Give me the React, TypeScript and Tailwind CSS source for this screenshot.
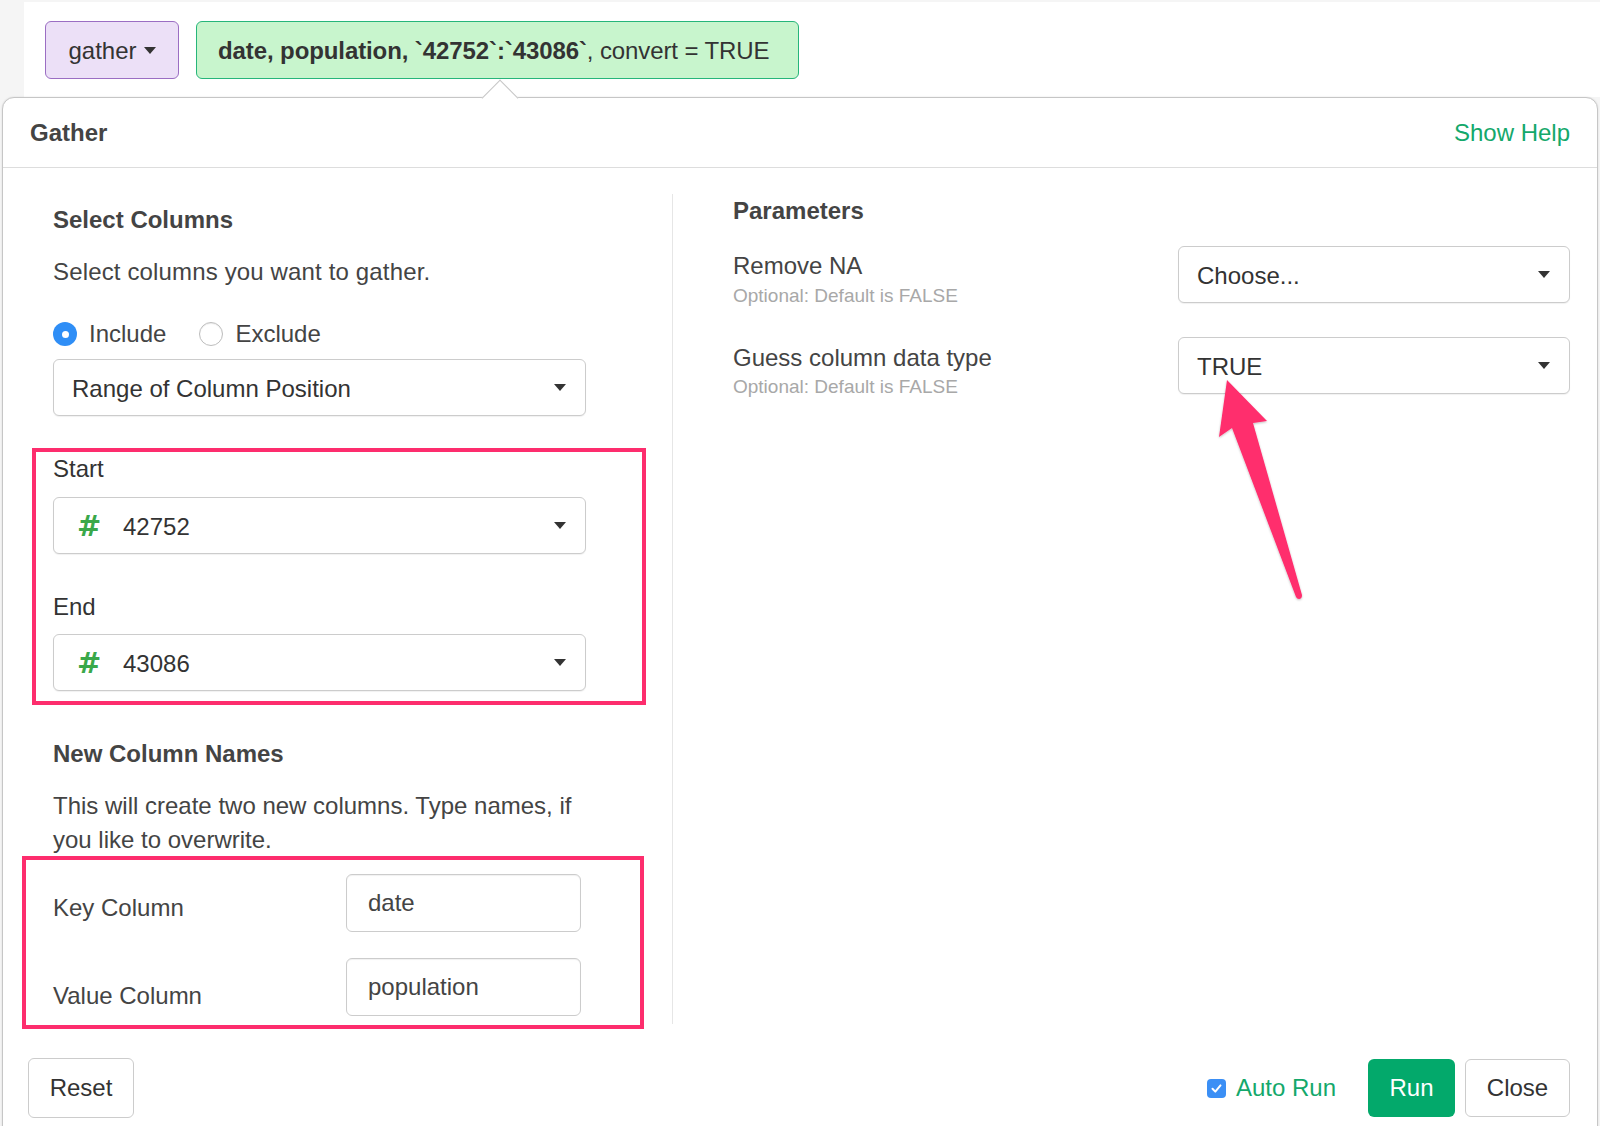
import React from "react";

const Caret = () => (
  <svg width="12" height="7" viewBox="0 0 12 7" className="shrink-0">
    <path d="M0 0 L12 0 L6 7 Z" fill="#333" />
  </svg>
);

const Select = ({ children, w = "w-[533px]" }: { children: React.ReactNode; w?: string }) => (
  <div className={`${w} h-[57px] border border-[#cccccc] rounded-[6px] bg-white flex items-center pl-[18px] pr-[19px] shadow-[0_1px_1px_rgba(0,0,0,0.06)]`}>
    <div className="flex-1 flex items-center pt-[2px] text-[24px] text-[#333]">{children}</div>
    <Caret />
  </div>
);

const Hash = () => (
  <span className="text-[#3aa84a] font-bold text-[29px] w-[51px] pl-[5px] leading-none font-['DejaVu_Sans',sans-serif]">#</span>
);

export default function App() {
  return (
    <div className="w-[1600px] h-[1126px] overflow-hidden relative bg-[#f5f5f5] font-['Liberation_Sans',Arial,sans-serif] text-[#333]">
      {/* top bar */}
      <div className="ml-[24px] mt-[2px] h-[95px] bg-white flex items-start pt-[19px] pl-[21px] gap-[17px]">
        <div className="h-[58px] w-[134px] rounded-[6px] border border-[#9b6ec3] bg-[#ece0f7] flex items-center justify-center gap-[7px] pt-[1px] text-[24px] text-[#333]">
          <span>gather</span>
          <Caret />
        </div>
        <div className="h-[58px] w-[603px] rounded-[6px] border border-[#27b57a] bg-[#c8f5cd] flex items-center pl-[21px] pt-[1px] text-[24px] text-[#333] whitespace-nowrap tracking-[-0.1px]">
          <span className="font-bold">date, population, `42752`:`43086`</span>
          <span>, convert = TRUE</span>
        </div>
      </div>

      {/* panel */}
      <div className="relative ml-[2px] w-[1596px] h-[1100px] bg-white border border-[#c6c6c6] rounded-t-[12px] shadow-[0_0_2px_rgba(0,0,0,0.12)]">
        {/* popover arrow */}
        <div className="absolute left-[484px] top-[-13px] w-[26px] h-[26px] rotate-45 bg-white border-l border-t border-[#c6c6c6]" />

        {/* header */}
        <div className="relative h-[70px] border-b border-[#dddddd] flex items-center justify-between pl-[27px] pr-[27px]">
          <span className="text-[24px] font-bold text-[#444]">Gather</span>
          <span className="text-[24px] text-[#14a86b]">Show Help</span>
        </div>

        {/* body */}
        <div className="flex mt-[26px] h-[830px]">
          {/* left column */}
          <div className="w-[670px] border-r border-[#e6e6e6] pl-[50px] flex flex-col">
            <div className="mt-[10px] leading-[32px] text-[24px] font-bold text-[#444]">Select Columns</div>
            <div className="mt-[20px] leading-[32px] text-[24px] text-[#444] tracking-[0.15px]">Select columns you want to gather.</div>
            <div className="mt-[30px] h-[32px] flex items-center text-[24px] text-[#444]">
              <span className="w-[24px] h-[24px] rounded-full bg-[#2f8ef6] flex items-center justify-center">
                <span className="w-[7px] h-[7px] rounded-full bg-white" />
              </span>
              <span className="ml-[12px]">Include</span>
              <span className="ml-[33px] w-[24px] h-[24px] rounded-full border border-[#bdbdbd] bg-white shadow-[inset_0_1px_1px_rgba(0,0,0,0.08)]" />
              <span className="ml-[12px]">Exclude</span>
            </div>
            <div className="mt-[9px]">
              <Select>
                <span>Range of Column Position</span>
              </Select>
            </div>

            <div className="mt-[32px] -ml-[21px] w-[614px] border-4 border-[#fd2d6d] pl-[17px] pt-[1px] pb-[10px]">
              <div className="leading-[32px] text-[24px] text-[#333]">Start</div>
              <div className="mt-[12px]">
                <Select>
                  <Hash />
                  <span>42752</span>
                </Select>
              </div>
              <div className="mt-[37px] leading-[32px] text-[24px] text-[#333]">End</div>
              <div className="mt-[11px]">
                <Select>
                  <Hash />
                  <span>43086</span>
                </Select>
              </div>
            </div>

            <div className="mt-[33px] leading-[32px] text-[24px] font-bold text-[#444]">New Column Names</div>
            <div className="mt-[19px] w-[545px] leading-[34px] text-[24px] text-[#444]">
              This will create two new columns. Type names, if you like to overwrite.
            </div>

            <div className="-mt-[1px] -ml-[31px] w-[622px] border-4 border-[#fd2d6d] pl-[27px] pt-[14px] pb-[9px]">
              <div className="flex h-[58px]">
                <div className="w-[293px] pt-[18px] leading-[32px] text-[24px] text-[#444]">Key Column</div>
                <div className="w-[235px] h-[58px] border border-[#cccccc] rounded-[6px] flex items-center pl-[21px] text-[24px] text-[#444] shadow-[inset_0_1px_1px_rgba(0,0,0,0.06)]">date</div>
              </div>
              <div className="flex h-[58px] mt-[26px]">
                <div className="w-[293px] pt-[22px] leading-[32px] text-[24px] text-[#444]">Value Column</div>
                <div className="w-[235px] h-[58px] border border-[#cccccc] rounded-[6px] flex items-center pl-[21px] text-[24px] text-[#444] shadow-[inset_0_1px_1px_rgba(0,0,0,0.06)]">population</div>
              </div>
            </div>
          </div>

          {/* right column */}
          <div className="flex-1 pl-[60px] pr-[27px] flex flex-col">
            <div className="mt-[1px] leading-[32px] text-[24px] font-bold text-[#444]">Parameters</div>
            <div className="mt-[19px] flex justify-between">
              <div className="pt-[5px]">
                <div className="leading-[30px] text-[24px] text-[#444]">Remove NA</div>
                <div className="mt-[3px] leading-[24px] text-[19px] text-[#a8a8a8]">Optional: Default is FALSE</div>
              </div>
              <Select w="w-[392px]">
                <span>Choose...</span>
              </Select>
            </div>
            <div className="mt-[29px] flex justify-between">
              <div className="pt-[6px]">
                <div className="leading-[30px] text-[24px] text-[#444]">Guess column data type</div>
                <div className="mt-[2px] leading-[24px] text-[19px] text-[#a8a8a8]">Optional: Default is FALSE</div>
              </div>
              <Select w="w-[392px]">
                <span>TRUE</span>
              </Select>
            </div>
          </div>
        </div>

        {/* footer */}
        <div className="mt-[34px] flex items-center justify-between pl-[25px] pr-[27px]">
          <div className="w-[106px] h-[60px] border border-[#cccccc] rounded-[6px] flex items-center justify-center text-[24px] text-[#333]">Reset</div>
          <div className="flex items-center">
            <span className="w-[19px] h-[19px] rounded-[4px] bg-[#3b8ff5] flex items-center justify-center">
              <svg width="13" height="13" viewBox="0 0 13 13">
                <path d="M2.5 6.8 L5.3 9.6 L10.5 3.4" stroke="white" strokeWidth="2" fill="none" strokeLinecap="round" strokeLinejoin="round" />
              </svg>
            </span>
            <span className="ml-[10px] text-[24px] text-[#14a86b]">Auto Run</span>
            <div className="ml-[32px] w-[87px] h-[58px] rounded-[6px] bg-[#03a96b] flex items-center justify-center text-[24px] text-white">Run</div>
            <div className="ml-[10px] w-[105px] h-[58px] border border-[#cccccc] rounded-[6px] flex items-center justify-center text-[24px] text-[#333]">Close</div>
          </div>
        </div>
      </div>

      {/* annotation arrow */}
      <svg className="absolute left-0 top-0 pointer-events-none" width="1600" height="1126" viewBox="0 0 1600 1126">
        <defs>
          <filter id="sh" x="-20%" y="-20%" width="140%" height="140%">
            <feDropShadow dx="0" dy="1" stdDeviation="1" floodColor="#000" floodOpacity="0.25" />
          </filter>
        </defs>
        <path
          d="M1227 380 L1267 421 L1253 423 L1302 595 Q1302 599 1299 599 Q1297 599 1296 597 L1232 428 L1219 437 Z"
          fill="#ff2d6d"
          filter="url(#sh)"
        />
      </svg>
    </div>
  );
}
